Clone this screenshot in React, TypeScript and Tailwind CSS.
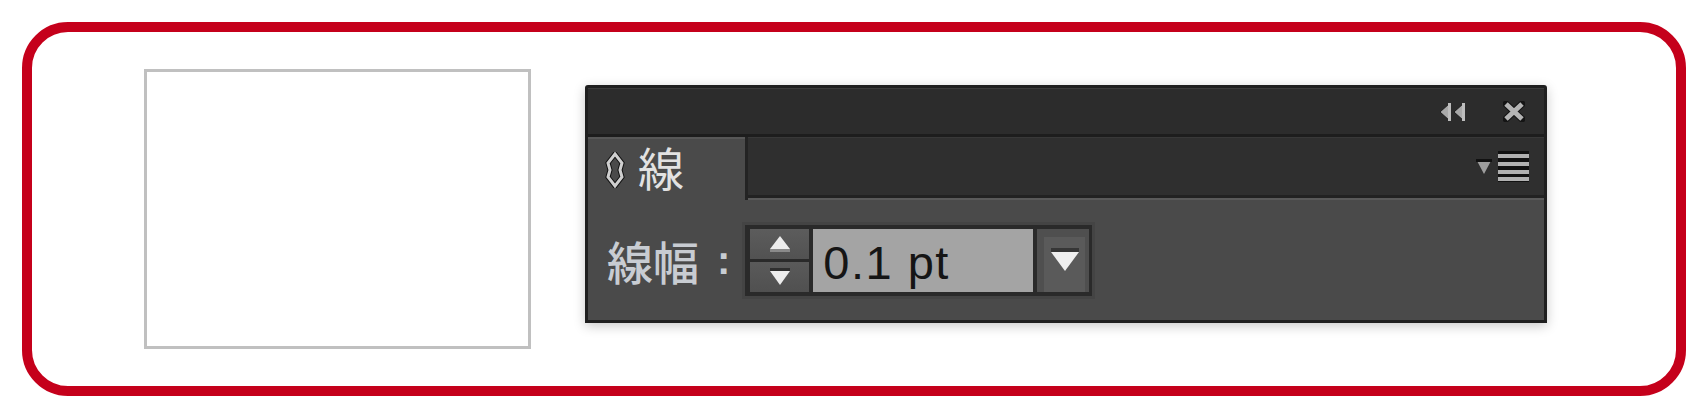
const cjk = { fontFamily: '"Noto Sans CJK JP", "Noto Sans CJK SC", sans-serif' };

function CollapseIcon() {
  return (
    <svg width="28" height="20" viewBox="0 0 28 20">
      <polygon points="12,1 12,19 2,10" fill="#a9a9a9" stroke="#1c1c1c" strokeWidth="1" />
      <rect x="10" y="1" width="3" height="18" fill="#bdbdbd" />
      <polygon points="26,1 26,19 16,10" fill="#a9a9a9" stroke="#1c1c1c" strokeWidth="1" />
      <rect x="24" y="1" width="3" height="18" fill="#bdbdbd" />
    </svg>
  );
}

function CloseIcon() {
  return (
    <svg width="22" height="21" viewBox="0 0 22 21">
      <path d="M3 3 L19 18 M19 3 L3 18" stroke="#141414" strokeWidth="7" strokeLinecap="square" />
      <path d="M3 3 L19 18 M19 3 L3 18" stroke="#b4b4b4" strokeWidth="5" strokeLinecap="butt" />
    </svg>
  );
}

function MenuIcon() {
  return (
    <svg width="53" height="31" viewBox="0 0 53 31">
      <polygon points="0,8 16,8 8,23" fill="#9d9d9d" />
      <rect x="0" y="8" width="16" height="3" fill="#111" />
      <rect x="22" y="0" width="31" height="31" fill="#111" />
      <rect x="22" y="3" width="31" height="4" fill="#b0b0b0" />
      <rect x="22" y="11" width="31" height="4" fill="#b0b0b0" />
      <rect x="22" y="19" width="31" height="4" fill="#b0b0b0" />
      <rect x="22" y="26" width="31" height="4" fill="#b0b0b0" />
    </svg>
  );
}

function TabArrows() {
  return (
    <svg width="20" height="36" viewBox="0 0 20 36">
      <path d="M10 2 L17 11 L15 18 L17 25 L10 34 L3 25 L5 18 L3 11 Z" fill="none" stroke="#111" strokeWidth="5" strokeLinejoin="miter" />
      <path d="M10 2 L17 11 L15 18 L17 25 L10 34 L3 25 L5 18 L3 11 Z" fill="none" stroke="#cfcfcf" strokeWidth="3" strokeLinejoin="miter" />
    </svg>
  );
}

function Tri({ up }: { up?: boolean }) {
  return up ? (
    <svg width="22" height="17" viewBox="0 0 22 17">
      <polygon points="11,1 21,14 1,14" fill="#ededed" />
      <rect x="1" y="14" width="20" height="3" fill="#8a8a8a" />
    </svg>
  ) : (
    <svg width="22" height="18" viewBox="0 0 22 18">
      <rect x="1" y="0" width="20" height="3" fill="#2f2f2f" />
      <polygon points="1,3 21,3 11,17" fill="#ededed" />
    </svg>
  );
}

export default function App() {
  return (
    <div className="h-[418px] w-[1708px] bg-white p-[22px]">
      <div className="flex h-full w-full items-start rounded-[46px] border-[10px] border-[#c5001b] pl-[112px] pt-[37px]">
        {/* empty artboard */}
        <div className="h-[280px] w-[387px] border-[3px] border-[#c0c0c0] bg-white"></div>

        {/* stroke panel */}
        <div className="ml-[54px] mt-[16px] flex h-[238px] w-[962px] flex-col rounded-t-[3px] border-[3px] border-[#1f1f1f] bg-[#4a4a4a] shadow-[0_3px_12px_rgba(0,0,0,0.22)]">
          <div className="flex h-[49px] items-center justify-end gap-[37px] border-t border-[#3b3b3b] border-b-[3px] border-b-[#1d1d1d] bg-[#2c2c2c] pr-[19px]">
            <CollapseIcon />
            <CloseIcon />
          </div>
          <div className="flex h-[63px]">
            <div className="flex w-[157px] items-center gap-[13px] border-t-[2px] border-[#575757] bg-[#4a4a4a] pl-[17px]">
              <TabArrows />
              <span className="pb-[8px] text-[46px] leading-none text-[#e2e2e2]" style={cjk}>線</span>
            </div>
            <div className="flex flex-1 flex-col border-l-[3px] border-[#232323]">
              <div className="flex flex-1 items-center justify-end border-t border-[#383838] border-b-[3px] border-b-[#222] bg-[#2f2f2f] pr-[15px]">
                <MenuIcon />
              </div>
              <div className="h-[2px] bg-[#5a5a5a]"></div>
            </div>
          </div>
          <div className="flex flex-1 items-center pl-[19px]">
            <span className="text-[46px] font-medium leading-none text-[#c8ccd2]" style={cjk}>線幅</span>
            <span className="ml-[18px] text-[40px] font-bold leading-none text-[#c8ccd2]" style={{ fontFamily: '"Liberation Sans", sans-serif' }}>:</span>
            <div className="ml-[15px] flex gap-[4px] bg-[#2a2a2a] py-[4px] pl-[5px] pr-[3px] shadow-[0_0_0_3px_#444]">
              <div className="flex w-[59px] flex-col gap-[3px]">
                <div className="flex h-[30px] items-center justify-center bg-gradient-to-b from-[#5c5c5c] to-[#525252]">
                  <Tri up />
                </div>
                <div className="flex h-[30px] items-center justify-center bg-gradient-to-b from-[#5a5a5a] to-[#505050]">
                  <Tri />
                </div>
              </div>
              <div className="flex h-[63px] w-[220px] items-center bg-[#a4a4a4] pl-[10px] pt-[4px]">
                <span className="text-[47px] leading-none tracking-[1.5px] text-[#151515]" style={{ fontFamily: '"Liberation Sans", sans-serif' }}>0.1 pt</span>
              </div>
              <div className="flex h-[63px] w-[52px] bg-[#4f4f4f] pl-[7px] pr-[4px] pt-[8px]">
                <div className="flex flex-1 items-start justify-center bg-[#5a5a5a] pt-[11px]">
                  <svg width="28" height="24" viewBox="0 0 28 24">
                    <rect x="0" y="0" width="28" height="4" fill="#363636" />
                    <polygon points="0,4 28,4 14,23" fill="#efefef" />
                  </svg>
                </div>
              </div>
            </div>
          </div>
        </div>
      </div>
    </div>
  );
}
